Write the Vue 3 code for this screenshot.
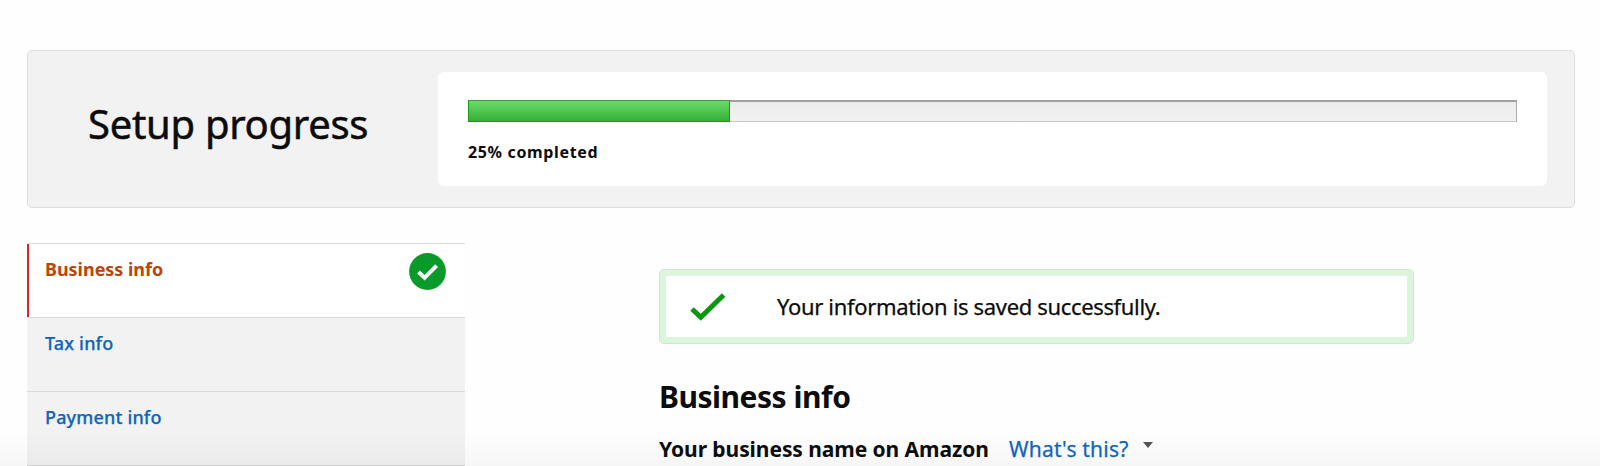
<script setup>
const progress = 25;

const steps = [
    { id: 1, label: 'Business info', active: true, done: true },
    { id: 2, label: 'Tax info', active: false, done: false },
    { id: 3, label: 'Payment info', active: false, done: false }
];
</script>

<template>

    <div class="page">
        <header class="setup">
            <h1 class="setup-title">Setup progress</h1>
            <div class="setup-card">
                <div class="bar">
                    <div class="bar-fill" :style="{ width: progress + '%' }"></div>
                </div>
                <p class="bar-label">{{ progress }}% completed</p>
            </div>
        </header>

        <div class="columns">
            <nav class="steps">
                <a v-for="step in steps" :key="step.id" class="step" :class="{ active: step.active }">
                    <span class="step-label">{{ step.label }}</span>
                    <svg v-if="step.done" class="step-done" viewBox="0 0 37 37">
                        <circle cx="18.5" cy="18.5" r="18.4" fill="#0a9a2a" />
                        <path d="M9.5 19 L15.6 24.8 L27.6 12.6" fill="none" stroke="#fff" stroke-width="4" />
                    </svg>
                </a>
            </nav>

            <main class="content">
                <div class="alert">
                    <svg class="alert-icon" viewBox="0 0 36 28">
                        <path d="M2 16 L10.8 24.2 L33.6 2" fill="none" stroke="#0b970b" stroke-width="5" />
                    </svg>
                    <p class="alert-text">Your information is saved successfully.</p>
                </div>

                <h2 class="heading">Business info</h2>

                <div class="field">
                    <span class="field-label">Your business name on Amazon</span>
                    <a class="field-help">What's this?</a>
                    <i class="caret"></i>
                </div>
            </main>
        </div>

        <div class="fade"></div>
    </div>

</template>

<style>
body {
    margin: 0;
    background: #fefefe;
}
</style>

<style scoped>
.page {
    position: relative;
    box-sizing: border-box;
    width: 1600px;
    height: 466px;
    padding: 50px 25px 0 27px;
    overflow: hidden;
    font-family: "Noto Sans", "Open Sans", sans-serif;
    color: #0c0c0c;
}

h1,
h2,
p {
    margin: 0;
}

/* Progress panel */
.setup {
    display: flex;
    box-sizing: border-box;
    height: 158px;
    padding: 21px 27px 21px 0;
    border: 1px solid #dedede;
    border-radius: 5px;
    background: #f2f2f2;
}

.setup-title {
    width: 410px;
    box-sizing: border-box;
    padding-left: 60px;
    font-size: 40px;
    font-weight: 400;
    letter-spacing: -0.3px;
    line-height: 103px;
    white-space: nowrap;
    -webkit-text-stroke: 0.5px;
}

.setup-card {
    flex: 1;
    box-sizing: border-box;
    padding: 28px 30px 0 30px;
    border-radius: 6px;
    background: #fff;
}

.bar {
    box-sizing: border-box;
    height: 22px;
    border: 1px solid #aaa;
    border-top: 2px solid #a0a0a0;
    border-bottom-color: #c8c8c8;
    background: linear-gradient(#ececec, #f2f2f2);
}

.bar-fill {
    box-sizing: border-box;
    height: 22px;
    margin: -2px 0 0 -1px;
    border: 1px solid #159a15;
    border-top-color: #3d9a3d;
    background: linear-gradient(#69db69, #35b035);
}

.bar-label {
    margin-top: 18px;
    font-size: 16px;
    font-weight: 700;
    letter-spacing: 0.65px;
    line-height: 24px;
}

/* Steps on the left, form on the right */
.columns {
    display: flex;
    align-items: flex-start;
    padding-top: 35px;
}

.steps {
    width: 438px;
    border-bottom: 2px solid #d2d2d2;
}

.step {
    display: flex;
    justify-content: space-between;
    box-sizing: border-box;
    height: 74px;
    padding: 9px 19px 0 18px;
    border-top: 1px solid #dadada;
    background: #f2f2f2;
    color: #0f66b8;
    font-size: 18px;
    font-weight: 500;
    letter-spacing: 0.17px;
    line-height: 32px;
    -webkit-text-stroke: 0.25px;
}

.step.active {
    background: linear-gradient(90deg, #d8242a 2px, #fff 2px);
    color: #bb4508;
    font-weight: 700;
    letter-spacing: -0.03px;
    -webkit-text-stroke: 0;
}

.step-done {
    width: 37px;
    height: 37px;
}

.content {
    width: 755px;
    margin-left: 194px;
    padding-top: 26px;
}

.alert {
    display: flex;
    align-items: center;
    box-sizing: border-box;
    height: 75px;
    padding-left: 24px;
    border: 1px solid #d8e0d8;
    border-radius: 5px;
    background: #fff;
    box-shadow: inset 0 0 0 6px #dcf6dc;
}

.alert-icon {
    width: 36px;
    height: 28px;
    margin-left: 6px;
}

.alert-text {
    margin: 0 0 2px 51px;
    font-size: 22px;
    letter-spacing: -0.34px;
    white-space: nowrap;
    -webkit-text-stroke: 0.25px;
}

.heading {
    margin-top: 33px;
    font-size: 30px;
    font-weight: 700;
    letter-spacing: -0.48px;
    line-height: 40px;
}

.field {
    display: flex;
    height: 30px;
    margin-top: 17px;
    font-size: 21px;
    line-height: 30px;
    white-space: nowrap;
}

.field-label {
    width: 350px;
    font-weight: 700;
    letter-spacing: -0.07px;
}

.field-help {
    width: 134px;
    color: #0f66c0;
    letter-spacing: 0.2px;
    -webkit-text-stroke: 0.25px;
}

.caret {
    width: 0;
    height: 0;
    margin-top: 8px;
    border: 5px solid transparent;
    border-top: 6px solid #555;
    border-bottom: 0;
}

/* Soft shade along the lower edge */
.fade {
    position: absolute;
    right: 0;
    bottom: 0;
    left: 0;
    height: 36px;
    background: linear-gradient(rgba(0, 0, 0, 0), rgba(0, 0, 0, 0.03));
    pointer-events: none;
}
</style>
